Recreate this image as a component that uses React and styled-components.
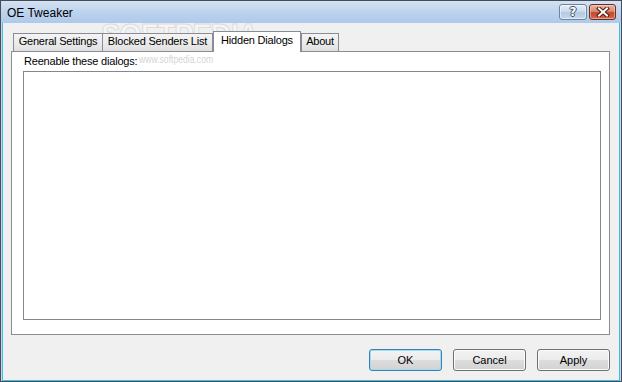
import React from "react";
import styled, { createGlobalStyle, css } from "styled-components";

const GlobalStyle = createGlobalStyle`
  html, body { margin: 0; padding: 0; background: #ffffff; }
  body { font-family: "Liberation Sans", Arial, sans-serif; }
  * { box-sizing: border-box; }
`;

const Window = styled.div`
  position: relative;
  width: 622px;
  height: 382px;
  border: 1px solid #454d56;
  background: #c6d9ef;
  padding: 0 1px;
  display: flex;
  flex-direction: column;
  overflow: hidden;
`;

const TitleBar = styled.div`
  height: 22px;
  margin: 0 -1px;
  padding: 3px 5px 0 6px;
  display: flex;
  align-items: flex-start;
  background: linear-gradient(#d4e2f3 0%, #bfd4ee 45%, #aec9ea 100%);
`;

const Title = styled.span`
  margin-top: 1px;
  font-size: 12px;
  line-height: 16px;
  color: #000;
`;

const CaptionButtons = styled.div`
  margin-left: auto;
  display: flex;
  gap: 2px;
`;

const CaptionButton = styled.div`
  width: ${(p) => p.$w}px;
  height: 16px;
  border-radius: 3px;
  display: flex;
  align-items: center;
  justify-content: center;
  ${(p) =>
    p.$close
      ? css`
          border: 1px solid #6b2f22;
          background: linear-gradient(#e8b4a4 0%, #d98a72 45%, #c7462b 55%, #d06a4e 100%);
          box-shadow: inset 0 0 0 1px rgba(255, 220, 210, 0.5);
        `
      : css`
          border: 1px solid #6e849e;
          background: linear-gradient(#e6eef8 0%, #ccdbee 45%, #b4c9e4 55%, #c6d7ec 100%);
          box-shadow: inset 0 0 0 1px rgba(255, 255, 255, 0.5);
        `}
`;

const HelpGlyph = styled.span`
  font-family: "DejaVu Sans", sans-serif;
  font-weight: bold;
  font-size: 12px;
  line-height: 12px;
  color: #ffffff;
  text-shadow: 1px 0 0 #3d4f66, -1px 0 0 #3d4f66, 0 1px 0 #3d4f66, 0 -1px 0 #3d4f66;
`;

const Body = styled.div`
  flex: 1;
  display: flex;
  flex-direction: column;
  background: #f0f0f0;
  border: 1px solid #3fbde6;
  border-top: none;
  padding: 8px 9px 9px 8px;
`;

const TabStrip = styled.div`
  position: relative;
  z-index: 1;
  display: flex;
  align-items: flex-end;
  padding-left: 2px;
  margin-bottom: -1px;
`;

const Tab = styled.div`
  width: ${(p) => p.$w}px;
  margin-left: ${(p) => p.$ml || 0}px;
  border: 1px solid #898c95;
  border-bottom: none;
  font-size: 11px;
  line-height: 13px;
  letter-spacing: -0.2px;
  text-align: center;
  white-space: nowrap;
  color: #000;
  ${(p) =>
    p.$active
      ? css`
          height: 21px;
          padding-top: 2px;
          background: #ffffff;
        `
      : css`
          height: 18px;
          padding-top: 1px;
          margin-bottom: 1px;
          background: linear-gradient(#f4f4f4 0%, #ececec 50%, #e0e0e0 100%);
        `}
`;

const Panel = styled.div`
  flex: 1;
  display: flex;
  flex-direction: column;
  gap: 3px;
  background: #ffffff;
  border: 1px solid #898c95;
  padding: 3px 8px 14px 11px;
`;

const Label = styled.div`
  margin-left: 1px;
  font-size: 11px;
  line-height: 13px;
  letter-spacing: -0.2px;
  color: #000;
`;

const ListBox = styled.div`
  flex: 1;
  background: #ffffff;
  border: 1px solid #828790;
`;

const ButtonRow = styled.div`
  margin-top: 14px;
  display: flex;
  justify-content: flex-end;
  gap: 11px;
`;

const Button = styled.button`
  width: 73px;
  height: 22px;
  padding: 0;
  border-radius: 3px;
  font-family: "Liberation Sans", Arial, sans-serif;
  font-size: 11px;
  line-height: 13px;
  color: #000;
  background: linear-gradient(#f3f3f3 0%, #ebebeb 50%, #dddddd 51%, #d2d2d2 100%);
  border: 1px solid ${(p) => (p.$default ? "#3c7fb1" : "#707070")};
  box-shadow: inset 0 0 0 1px ${(p) => (p.$default ? "#9fdcf6" : "#fbfbfb")};
`;

const Watermark = styled.div`
  position: absolute;
  left: 100px;
  top: 18px;
  font-family: "Liberation Sans", Arial, sans-serif;
  font-weight: bold;
  font-size: 32px;
  line-height: 32px;
  letter-spacing: -1px;
  color: rgba(255, 255, 255, 0.4);
  -webkit-text-stroke: 1px rgba(195, 195, 195, 0.5);
  transform: scaleX(0.9);
  transform-origin: left top;
  pointer-events: none;
`;

const WatermarkUrl = styled.div`
  position: absolute;
  left: 138px;
  top: 53px;
  font-family: "Liberation Sans", Arial, sans-serif;
  font-size: 10px;
  line-height: 12px;
  color: rgba(200, 200, 200, 0.8);
  transform: scaleX(0.86);
  transform-origin: left top;
  pointer-events: none;
`;

const CloseIcon = () => (
  <svg width="14" height="10" viewBox="0 0 14 10">
    <path d="M3 1.5 L11 8.5 M11 1.5 L3 8.5" stroke="#4a1a10" strokeWidth="4" strokeLinecap="square" fill="none" />
    <path d="M3 1.5 L11 8.5 M11 1.5 L3 8.5" stroke="#ffffff" strokeWidth="2" strokeLinecap="square" fill="none" />
  </svg>
);

export default function App() {
  return (
    <>
      <GlobalStyle />
      <Window>
        <TitleBar>
          <Title>OE Tweaker</Title>
          <CaptionButtons>
            <CaptionButton $w={28}>
              <HelpGlyph>?</HelpGlyph>
            </CaptionButton>
            <CaptionButton $w={27} $close>
              <CloseIcon />
            </CaptionButton>
          </CaptionButtons>
        </TitleBar>
        <Body>
          <TabStrip>
            <Tab $w={90}>General Settings</Tab>
            <Tab $w={111} $ml={-1}>Blocked Senders List</Tab>
            <Tab $w={88} $active>Hidden Dialogs</Tab>
            <Tab $w={38}>About</Tab>
          </TabStrip>
          <Panel>
            <Label>Reenable these dialogs:</Label>
            <ListBox />
          </Panel>
          <ButtonRow>
            <Button $default>OK</Button>
            <Button>Cancel</Button>
            <Button>Apply</Button>
          </ButtonRow>
        </Body>
        <Watermark>SOFTPEDIA</Watermark>
        <WatermarkUrl>www.softpedia.com</WatermarkUrl>
      </Window>
    </>
  );
}
